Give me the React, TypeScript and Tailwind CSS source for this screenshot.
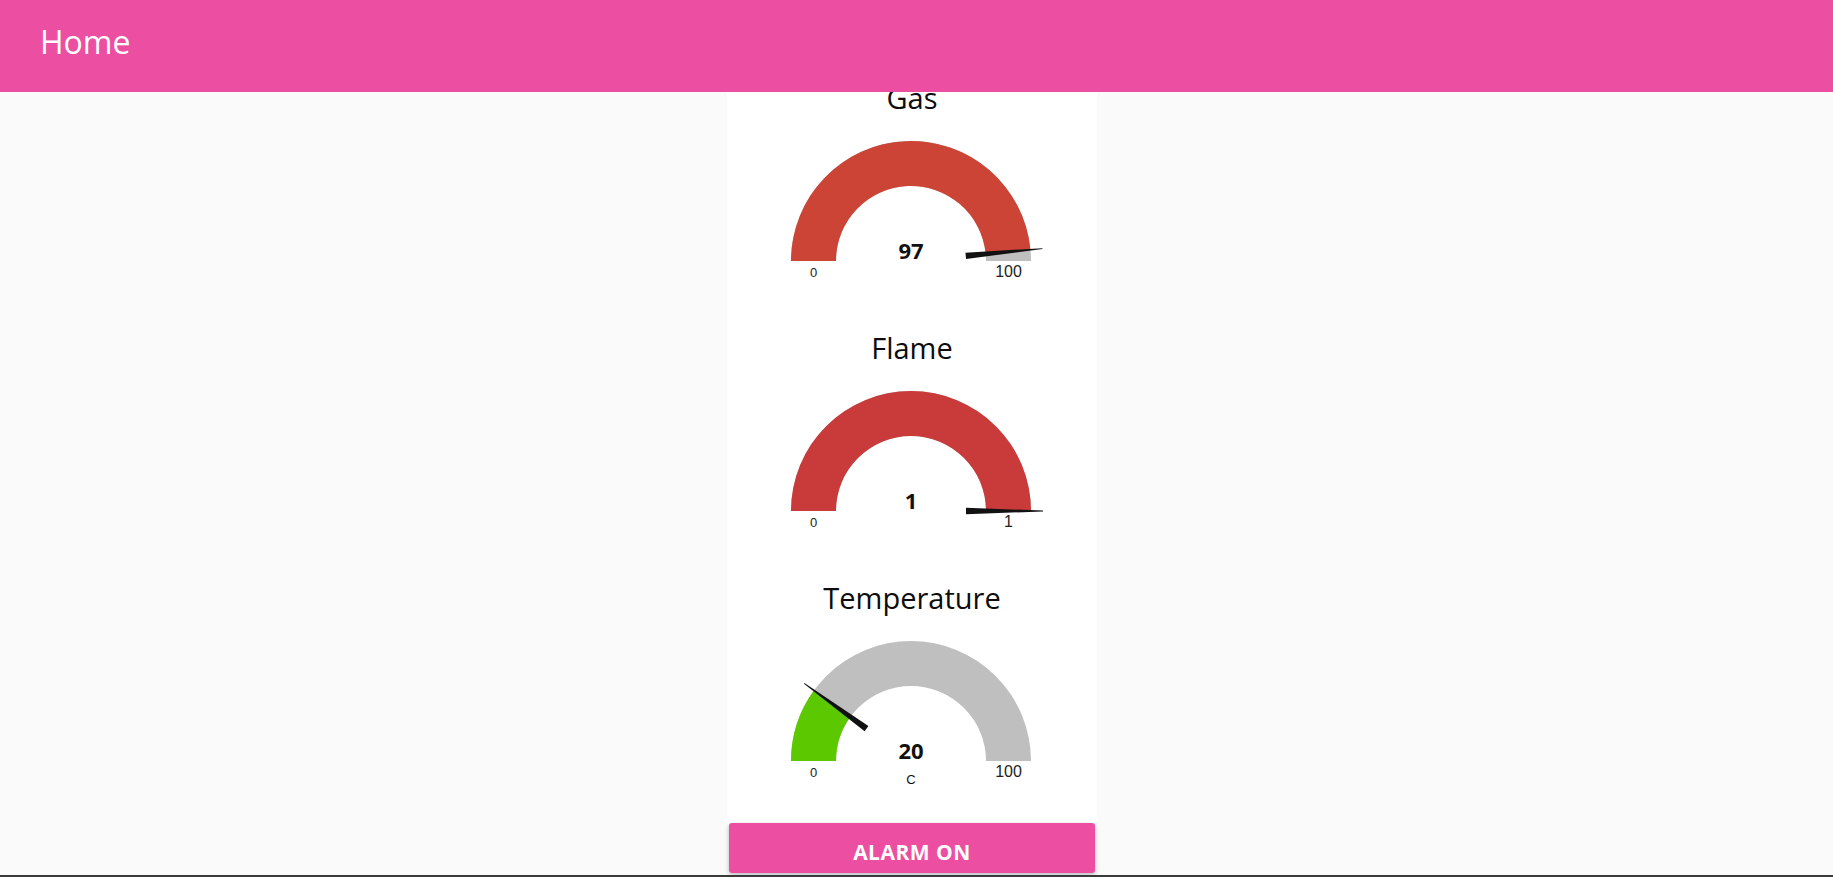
import React from "react";

type GaugeProps = {
  title: string;
  value: number;
  min: number;
  max: number;
  color: string;
  units?: string;
};

const CX = 184;
const CY = 138;
const R_OUT = 120;
const R_IN = 75;

function pt(r: number, phi: number) {
  return [CX - r * Math.cos(phi), CY - r * Math.sin(phi)];
}

function sector(a0: number, a1: number) {
  const [x0, y0] = pt(R_OUT, a0);
  const [x1, y1] = pt(R_OUT, a1);
  const [x2, y2] = pt(R_IN, a1);
  const [x3, y3] = pt(R_IN, a0);
  return `M${x0} ${y0} A${R_OUT} ${R_OUT} 0 0 1 ${x1} ${y1} L${x2} ${y2} A${R_IN} ${R_IN} 0 0 0 ${x3} ${y3} Z`;
}

function needle(phi: number) {
  const dx = -Math.cos(phi);
  const dy = -Math.sin(phi);
  const px = -dy;
  const py = dx;
  const b = [CX + dx * 55, CY + dy * 55];
  const t = [CX + dx * 132, CY + dy * 132];
  const w0 = 3.2;
  const w1 = 0.4;
  const pts = [
    [b[0] + px * w0, b[1] + py * w0],
    [t[0] + px * w1, t[1] + py * w1],
    [t[0] - px * w1, t[1] - py * w1],
    [b[0] - px * w0, b[1] - py * w0],
  ];
  return pts.map((p) => p.join(",")).join(" ");
}

function Gauge({ title, value, min, max, color, units }: GaugeProps) {
  const pct = Math.min(1, Math.max(0, (value - min) / (max - min)));
  const phi = pct * Math.PI;
  return (
    <div className="flex h-[250px] flex-col items-center">
      <div className="h-[50px] pt-[5px] text-[29px] font-medium leading-[40px] text-[#0d0d0d]">{title}</div>
      <svg width="370" height="200" viewBox="0 0 370 200">
        <path d={sector(0, Math.PI)} fill="#bfbfbf" />
        {pct > 0 ? <path d={sector(0, phi)} fill={color} /> : null}
        <polygon points={needle(phi)} fill="#111" />
        <text
          x={CX}
          y={CY - 2}
          textAnchor="middle"
          fontFamily="'Open Sans', sans-serif"
          fontWeight="700"
          fontSize="22"
          fill="#111"
        >
          {value}
        </text>
        {units ? (
          <text x={CX} y={CY + 23} textAnchor="middle" fontFamily="'Liberation Sans', Arial, sans-serif" fontSize="13" fill="#111">
            {units}
          </text>
        ) : null}
        <text x={CX - 97.5} y={CY + 16} textAnchor="middle" fontFamily="'Liberation Sans', Arial, sans-serif" fontSize="13" fill="#222">
          {min}
        </text>
        <text x={CX + 97.5} y={CY + 16} textAnchor="middle" fontFamily="'Liberation Sans', Arial, sans-serif" fontSize="16" fill="#222">
          {max}
        </text>
      </svg>
    </div>
  );
}

export default function App() {
  return (
    <div className="flex h-[877px] flex-col overflow-hidden bg-[#fafafa]" style={{ fontFamily: "'Open Sans', sans-serif" }}>
      <header className="relative z-10 flex h-[92px] shrink-0 items-center bg-[#ec4fa1] px-10 pb-[8px]">
        <h1 className="text-[32px] font-normal text-white">Home</h1>
      </header>
      <main className="flex flex-1 justify-center pr-[9px]">
        <div className="-mt-[19px] flex w-[370px] flex-col">
          <div className="bg-white">
            <Gauge title="Gas" value={97} min={0} max={100} color="#cb4436" />
            <Gauge title="Flame" value={1} min={0} max={1} color="#c93a3a" />
            <Gauge title="Temperature" value={20} min={0} max={100} color="#5bc800" units="C" />
          </div>
          <div className="px-[2px]">
            <button
              type="button"
              className="flex h-[50px] w-full items-center justify-center rounded-[3px] bg-[#ec4fa1] pt-[9px] text-[21px] font-bold tracking-[0.5px] text-white shadow-[0_2px_5px_rgba(0,0,0,0.26)]"
            >
              ALARM ON
            </button>
          </div>
        </div>
      </main>
      <div className="h-[2px] shrink-0 bg-[#3a3a3a]" />
    </div>
  );
}
